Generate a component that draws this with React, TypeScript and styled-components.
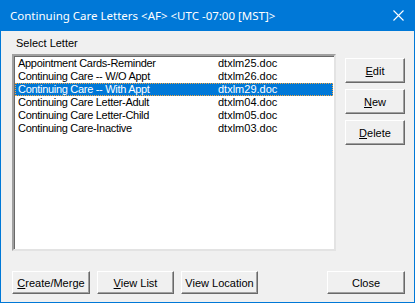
import React, { useState } from "react";
import styled, { createGlobalStyle } from "styled-components";

type Letter = { name: string; file: string };

const letters: Letter[] = [
  { name: "Appointment Cards-Reminder", file: "dtxlm25.doc" },
  { name: "Continuing Care -- W/O Appt", file: "dtxlm26.doc" },
  { name: "Continuing Care -- With Appt", file: "dtxlm29.doc" },
  { name: "Continuing Care Letter-Adult", file: "dtxlm04.doc" },
  { name: "Continuing Care Letter-Child", file: "dtxlm05.doc" },
  { name: "Continuing Care-Inactive", file: "dtxlm03.doc" },
];

const GlobalStyle = createGlobalStyle`
  html, body {
    margin: 0;
    padding: 0;
    background: #f0f0f0;
  }
`;

const Window = styled.div`
  box-sizing: border-box;
  width: 415px;
  height: 303px;
  border: 1px solid #0078d7;
  border-top: 0;
  background: #f0f0f0;
  display: flex;
  flex-direction: column;
  font-family: "Liberation Sans", Arial, sans-serif;
  font-size: 11px;
  color: #000;
`;

const TitleBar = styled.div`
  height: 31px;
  margin: 0 -1px;
  background: #0078d7;
  color: #fff;
  display: flex;
  align-items: center;
  justify-content: space-between;
  padding: 0 0 0 10px;
  font-family: "Noto Sans", "Open Sans", sans-serif;
  font-size: 11.5px;
`;

const CloseGlyph = styled.div`
  width: 34px;
  height: 31px;
  display: flex;
  align-items: center;
  justify-content: center;
`;

const Client = styled.div`
  flex: 1;
  display: flex;
  flex-direction: column;
  padding: 6px 9px 8px 11px;
`;

const Label = styled.div`
  height: 13px;
  line-height: 13px;
  margin-left: 4px;
  margin-bottom: 4px;
`;

const MainRow = styled.div`
  display: flex;
  gap: 9px;
  align-items: flex-start;
`;

const ListBox = styled.div`
  box-sizing: border-box;
  width: 324px;
  height: 197px;
  background: #fff;
  border: 2px solid;
  border-color: #a0a0a0 #e3e3e3 #e3e3e3 #a0a0a0;
  box-shadow: inset 1px 1px 0 #696969;
  padding: 1px 1px;
`;

const Row = styled.div<{ $selected?: boolean }>`
  box-sizing: border-box;
  height: 13px;
  line-height: 11px;
  display: flex;
  padding-left: 2px;
  white-space: nowrap;
  background: ${({ $selected }) => ($selected ? "#0078d7" : "transparent")};
  color: ${({ $selected }) => ($selected ? "#fff" : "#000")};
  border: 1px dotted ${({ $selected }) => ($selected ? "#f5a742" : "transparent")};
  cursor: default;
`;

const NameCol = styled.span`
  width: 200px;
  letter-spacing: -0.3px;
`;

const SideButtons = styled.div`
  display: flex;
  flex-direction: column;
  gap: 6px;
  padding-top: 4px;
`;

const Button = styled.button<{ $w?: number; $h?: number }>`
  box-sizing: border-box;
  width: ${({ $w }) => $w ?? 60}px;
  height: ${({ $h }) => $h ?? 25}px;
  padding: 0;
  background: #f0f0f0;
  border: 1px solid;
  border-color: #fff #696969 #696969 #fff;
  box-shadow: inset -1px -1px 0 #a0a0a0;
  font-family: "Liberation Sans", Arial, sans-serif;
  font-size: 11px;
  color: #000;
  cursor: default;

  u {
    text-underline-offset: 1px;
  }
`;

const BottomRow = styled.div`
  margin-top: auto;
  display: flex;
  gap: 7px;
`;

const Spacer = styled.div`
  flex: 1;
`;

const App: React.FC = () => {
  const [selected, setSelected] = useState(2);

  return (
    <>
      <GlobalStyle />
      <Window>
        <TitleBar>
          <span>Continuing Care Letters &lt;AF&gt; &lt;UTC -07:00 [MST]&gt;</span>
          <CloseGlyph>
            <svg width="11" height="11" viewBox="0 0 11 11">
              <path d="M0.5 0.5L10.5 10.5M10.5 0.5L0.5 10.5" stroke="#fff" strokeWidth="1.1" />
            </svg>
          </CloseGlyph>
        </TitleBar>
        <Client>
          <Label>Select Letter</Label>
          <MainRow>
            <ListBox role="listbox">
              {letters.map((l, i) => (
                <Row
                  key={l.file}
                  role="option"
                  aria-selected={i === selected}
                  $selected={i === selected}
                  onClick={() => setSelected(i)}
                >
                  <NameCol>{l.name}</NameCol>
                  <span>{l.file}</span>
                </Row>
              ))}
            </ListBox>
            <SideButtons>
              <Button type="button">
                <u>E</u>dit
              </Button>
              <Button type="button">
                <u>N</u>ew
              </Button>
              <Button type="button">
                <u>D</u>elete
              </Button>
            </SideButtons>
          </MainRow>
          <BottomRow>
            <Button type="button" $w={78} $h={23}>
              <u>C</u>reate/Merge
            </Button>
            <Button type="button" $w={77} $h={23}>
              <u>V</u>iew List
            </Button>
            <Button type="button" $w={77} $h={23}>
              View Location
            </Button>
            <Spacer />
            <Button type="button" $w={78} $h={23}>
              Close
            </Button>
          </BottomRow>
        </Client>
      </Window>
    </>
  );
};

export default App;
